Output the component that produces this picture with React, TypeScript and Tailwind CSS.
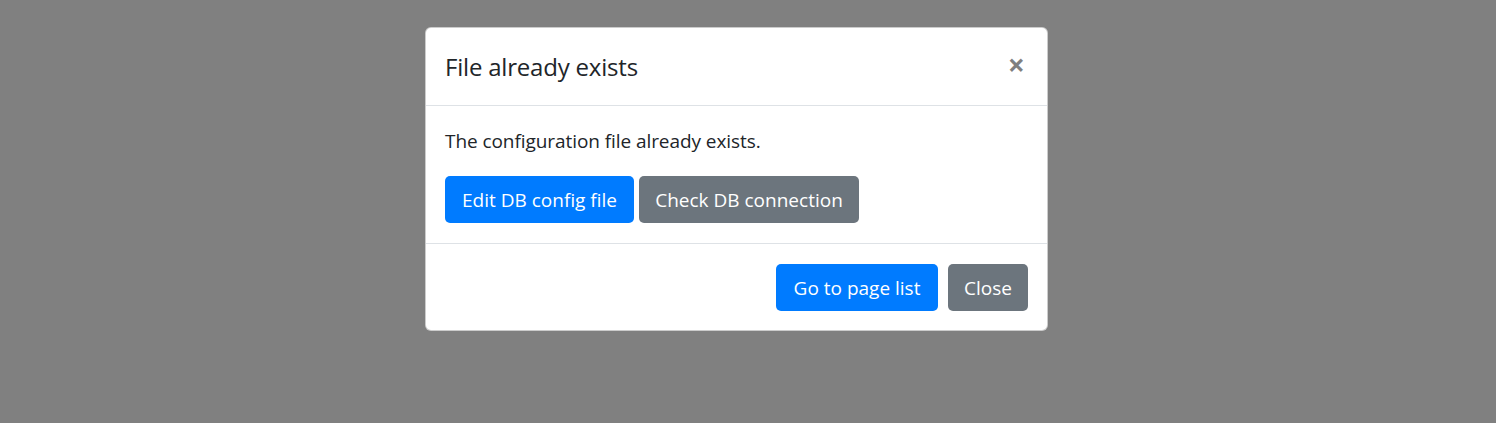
import React from "react";

const font = { fontFamily: '"Open Sans", "Noto Sans", sans-serif' };

const App = () => {
  return (
    <div
      className="w-full h-[423px] bg-[#808080] flex justify-center pt-[27px] pr-[23px] text-[#212529]"
      style={font}
    >
      <div className="w-[623px] h-[304px] bg-white border border-black/20 rounded-[6px] flex flex-col">
        <div className="h-[78px] flex items-center justify-between pl-[19px] pr-[22px] border-b border-[#dee2e6]">
          <h5 className="text-[24px] leading-[37px] tracking-[-0.2px]">File already exists</h5>
          <button className="text-[30px] leading-none font-bold text-black/50 -mt-[4px]">
            ×
          </button>
        </div>
        <div className="h-[138px] px-[19px] pt-[20px] border-b border-[#dee2e6]">
          <p className="text-[19px] leading-[30px] mb-[20px] tracking-[-0.07px]">
            The configuration file already exists.
          </p>
          <div className="flex gap-[5px]">
            <button className="h-[47px] w-[189px] pt-[2px] bg-[#007bff] text-white text-[19px] rounded-[5px]">
              Edit DB config file
            </button>
            <button className="h-[47px] w-[220px] pt-[2px] bg-[#6c757d] text-white text-[19px] rounded-[5px]">
              Check DB connection
            </button>
          </div>
        </div>
        <div className="flex-1 flex items-center justify-end gap-[10px] pr-[19px]">
          <button className="h-[47px] w-[162px] pt-[2px] bg-[#007bff] text-white text-[19px] rounded-[5px]">
            Go to page list
          </button>
          <button className="h-[47px] w-[80px] pt-[2px] bg-[#6c757d] text-white text-[19px] rounded-[5px]">
            Close
          </button>
        </div>
      </div>
    </div>
  );
};

export default App;
